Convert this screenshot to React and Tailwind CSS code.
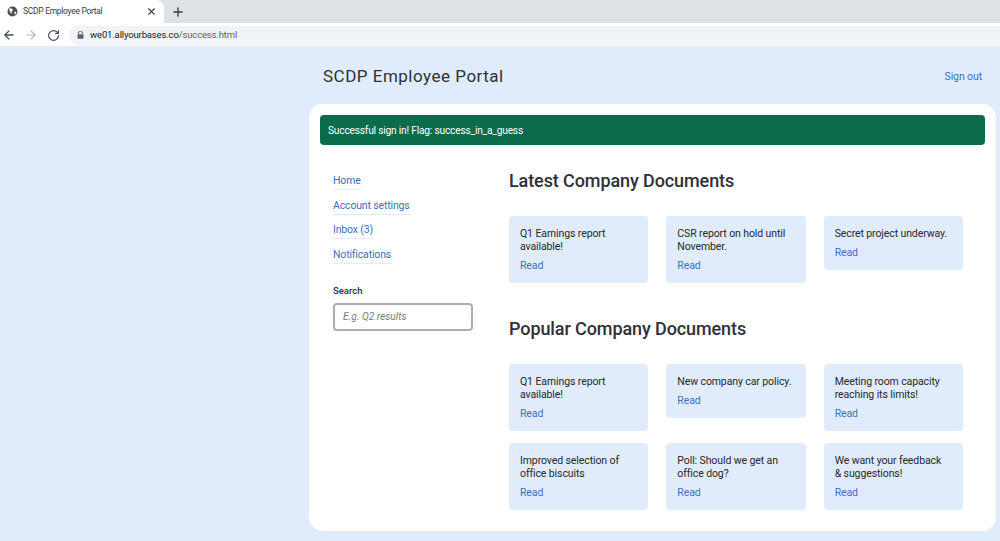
import React from 'react';
import { X, Plus, ArrowLeft, ArrowRight, RotateCw } from 'lucide-react';

const latestDocs = [
  { title: 'Q1 Earnings report available!' },
  { title: 'CSR report on hold until November.' },
  { title: 'Secret project underway.' },
];

const popularDocs = [
  { title: 'Q1 Earnings report available!' },
  { title: 'New company car policy.' },
  { title: 'Meeting room capacity reaching its limits!' },
  { title: 'Improved selection of office biscuits' },
  { title: 'Poll: Should we get an office dog?' },
  { title: 'We want your feedback & suggestions!' },
];

const navLinks = ['Home', 'Account settings', 'Inbox (3)', 'Notifications'];

const DocCard = ({ title }) => (
  <div className="bg-[#e0ecfc] rounded-[4px] pl-[11px] pr-[13px] pt-[11px] pb-[11px] self-start">
    <p className="text-[10.5px] tracking-[-0.1px] leading-[13px] text-[#25272c]">{title}</p>
    <a className="block mt-[6px] text-[10.5px] tracking-[-0.1px] leading-[13px] text-[#3f6fc0]">Read</a>
  </div>
);

const BrowserChrome = () => (
  <div className="bg-white">
    {/* Tab strip */}
    <div className="h-[23px] bg-[#dee1e6] flex items-center">
      <div className="w-[164px] h-[23px] bg-white rounded-tr-[8px] flex items-center pl-[7px] pr-[7px]">
        <svg width="11" height="11" viewBox="0 0 12 12">
          <circle cx="6" cy="6" r="5.5" fill="#4a4d52" />
          <path d="M2 3 L5 2.5 L6.5 4.5 L5 6 L5.5 8.5 L3.5 7 Z M8 6 L10.5 6.5 L8.5 10 Z" fill="#fff" />
        </svg>
        <span className="ml-[5px] text-[8.5px] tracking-[-0.3px] text-[#3c4043] whitespace-nowrap flex-1">SCDP Employee Portal</span>
        <X size={11} strokeWidth={2.4} className="text-[#3c4043]" />
      </div>
      <Plus size={14} strokeWidth={2.4} className="ml-[7px] text-[#3c4043]" />
    </div>
    {/* Address bar */}
    <div className="h-[23px] pt-[1px] flex items-center pl-[2px]">
      <ArrowLeft size={14} strokeWidth={2.2} className="text-[#4a4d52]" />
      <ArrowRight size={14} strokeWidth={2} className="ml-[8px] text-[#b4b7bb]" />
      <RotateCw size={13} strokeWidth={2.2} className="ml-[9px] text-[#4a4d52]" />
      <div className="ml-[9px] flex-1 h-[19px] bg-[#f1f3f4] rounded-l-[10px] flex items-center pl-[8px]">
        <svg width="7" height="8" viewBox="0 0 7 8">
          <path d="M1.5 3.5 V2.3 A2 2 0 0 1 5.5 2.3 V3.5" fill="none" stroke="#5f6368" />
          <rect x="0.5" y="3.2" width="6" height="4.5" rx="0.6" fill="#5f6368" />
        </svg>
        <span className="ml-[6px] text-[9.5px] tracking-[-0.15px] text-[#202124] whitespace-nowrap">
          we01.allyourbases.co<span className="text-[#5f6368]">/success.html</span>
        </span>
      </div>
    </div>
  </div>
);

const App = () => {
  return (
    <div className="h-[541px] overflow-hidden bg-[#e0ecfc] font-['Roboto',sans-serif]">
      <BrowserChrome />

      <div className="pl-[309px] pr-[4px]">
        {/* Header */}
        <div className="h-[58px] pt-[4px] flex items-center justify-between pl-[14px] pr-[14px]">
          <h1 className="text-[17px] tracking-[0.5px] text-[#2d3036]">SCDP Employee Portal</h1>
          <a className="text-[10.5px] tracking-[-0.1px] text-[#3f6fc0]">Sign out</a>
        </div>

        {/* Main card */}
        <div className="h-[427px] bg-white rounded-[14px] p-[11px]">
          <div className="h-[30px] pt-[1px] bg-[#0b6c4c] rounded-[4px] flex items-center px-[8px] text-[10.2px] tracking-[-0.2px] text-white">
            Successful sign in! Flag: success_in_a_guess
          </div>

          <div className="flex pt-[21px]">
            {/* Sidebar */}
            <aside className="w-[189px] shrink-0 pl-[13px] pt-[6px]">
              <ul className="flex flex-col gap-[6.7px] items-start">
                {navLinks.map((link) => (
                  <li key={link} className="h-[18px] text-[10.5px] tracking-[-0.15px] leading-[17px] text-[#3f6fc0] border-b border-[#e0ecfc]">
                    {link}
                  </li>
                ))}
              </ul>
              <label className="block mt-[20px] text-[9.5px] leading-[13px] font-medium text-[#2d3036]">Search</label>
              <div className="mt-[6px] w-[140px] h-[28px] border-2 border-[#adadb7] rounded-[4px] flex items-center pl-[8px] text-[10.2px] italic text-[#7a7a80]">
                E.g. Q2 results
              </div>
            </aside>

            {/* Documents */}
            <main className="w-[454px]">
              <h2 className="h-[28px] text-[18px] tracking-[-0.1px] leading-[30px] font-medium text-[#2d3036]">Latest Company Documents</h2>
              <div className="mt-[22px] grid grid-cols-3 gap-x-[18px] gap-y-[12px]">
                {latestDocs.map((doc, i) => (
                  <DocCard key={i} title={doc.title} />
                ))}
              </div>
              <h2 className="mt-[31px] h-[28px] text-[18px] tracking-[-0.1px] leading-[30px] font-medium text-[#2d3036]">Popular Company Documents</h2>
              <div className="mt-[22px] grid grid-cols-3 gap-x-[18px] gap-y-[12px]">
                {popularDocs.map((doc, i) => (
                  <DocCard key={i} title={doc.title} />
                ))}
              </div>
            </main>
          </div>
        </div>
      </div>
    </div>
  );
};

export default App;
